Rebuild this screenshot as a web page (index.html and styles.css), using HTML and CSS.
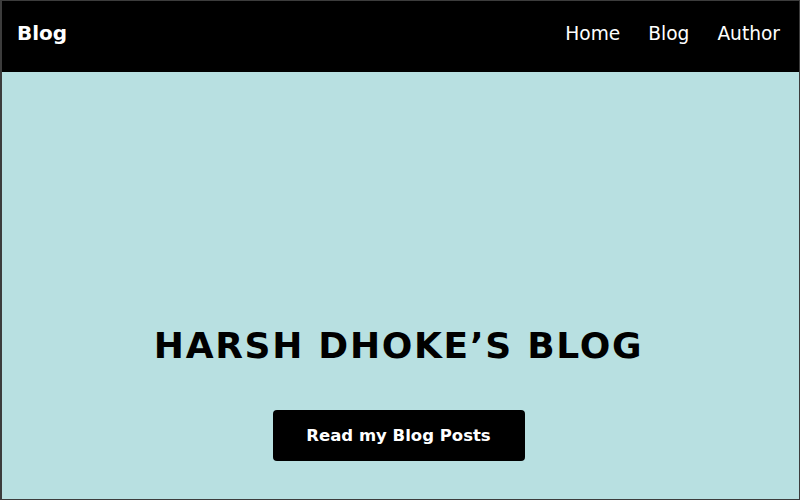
FILE: index.html
```html
<!DOCTYPE html>
<html lang="en">
<head>
<meta charset="utf-8">
<title>Harsh Dhoke's Blog</title>
<link rel="stylesheet" href="styles.css">
</head>
<body>
<div class="page">
  <header class="topbar">
    <a class="brand" href="#">Blog</a>
    <nav class="nav">
      <a href="#">Home</a>
      <a href="#">Blog</a>
      <a href="#">Author</a>
    </nav>
  </header>
  <section class="hero">
    <h1 class="hero-title">HARSH DHOKE’S BLOG</h1>
    <a class="hero-btn" href="#">Read my Blog Posts</a>
  </section>
</div>
</body>
</html>
```
FILE: styles.css
```css
* { box-sizing: border-box; }
html, body { margin: 0; padding: 0; height: 100%; }
body {
  font-family: "DejaVu Sans", Verdana, sans-serif;
  background: #b8e0e1;
}
.page {
  height: 500px;
  display: flex;
  flex-direction: column;
  border: 1px solid #3c3c3c;
  border-left-width: 2px;
}
.topbar {
  height: 71px;
  background: #000;
  display: flex;
  align-items: center;
  justify-content: space-between;
  padding: 0 19px 7px 15px;
}
.brand {
  color: #fff;
  text-decoration: none;
  font-weight: 700;
  font-size: 20px;
}
.nav { display: flex; gap: 28px; }
.nav a {
  color: #fff;
  text-decoration: none;
  font-size: 18.6px;
}
.hero {
  flex: 1;
  background: #b8e0e1;
  display: flex;
  flex-direction: column;
  align-items: center;
  justify-content: flex-end;
  padding: 0 4px 38px 0;
}
.hero-title {
  margin: 0 0 44px;
  font-size: 36px;
  font-weight: 700;
  letter-spacing: 1.7px;
  color: #000;
}
.hero-btn {
  width: 252px;
  height: 51px;
  display: flex;
  align-items: center;
  justify-content: center;
  background: #000;
  color: #fff;
  border-radius: 4px;
  text-decoration: none;
  font-weight: 700;
  font-size: 16.5px;
}
```
